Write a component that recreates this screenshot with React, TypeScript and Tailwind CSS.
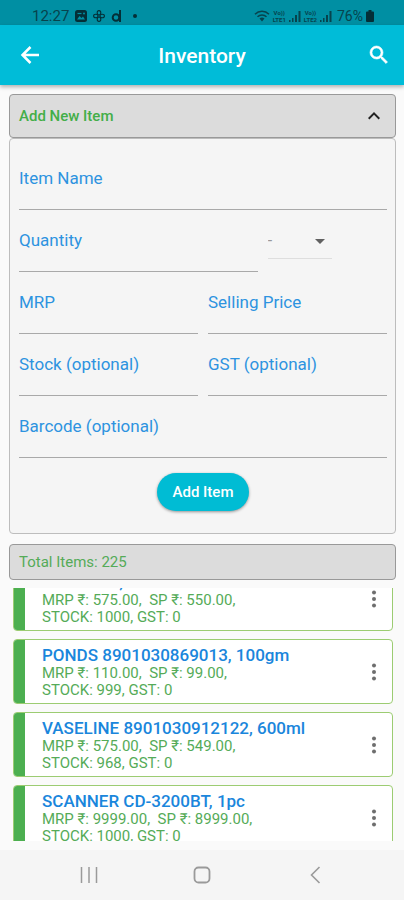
import { useEffect, useRef } from "react";

type Item = { name: string; mrp: string; sp: string; stock: number; gst: number };

const items: Item[] = [
  { name: "VASELINE, 100ml", mrp: "575.00", sp: "550.00", stock: 1000, gst: 0 },
  { name: "PONDS 8901030869013, 100gm", mrp: "110.00", sp: "99.00", stock: 999, gst: 0 },
  { name: "VASELINE 8901030912122, 600ml", mrp: "575.00", sp: "549.00", stock: 968, gst: 0 },
  { name: "SCANNER CD-3200BT, 1pc", mrp: "9999.00", sp: "8999.00", stock: 1000, gst: 0 },
];

function Signal() {
  return (
    <svg className="w-3 h-3" viewBox="0 0 12 12" fill="currentColor">
      <path d="M0 10h1.500v2H0zM3 8h1.500v4H3zM6 5h2v7H6zM9.500 1h2v11h-2z" />
    </svg>
  );
}

function Volte({ sim }: { sim: number }) {
  return (
    <span className="flex flex-col items-center text-[6px] leading-[7px] font-bold">
      <span>Vo))</span>
      <span>LTE{sim}</span>
    </span>
  );
}

function StatusBar() {
  return (
    <div className="h-[25px] shrink-0 bg-[#008fa3] text-[#07434d] flex items-center justify-between pt-[6px] pl-8 pr-[30px]">
      <div className="flex items-center gap-[6px]">
        <span className="text-[15px] leading-4">12:27</span>
        <svg className="w-3 h-3 text-[#042f37]" viewBox="0 0 12 12">
          <rect width="12" height="12" rx="2.500" fill="currentColor" />
          <path d="M2 9.500 4.500 6l2 2L8 6.500l2 3z" fill="#008fa3" />
          <path d="M2.500 3.500h4" stroke="#008fa3" strokeWidth="1.200" />
          <circle cx="9" cy="3.500" r="1" fill="#008fa3" />
        </svg>
        <svg className="w-3 h-3 text-[#042f37]" viewBox="0 0 12 12" fill="none" stroke="currentColor" strokeWidth="1.100">
          <ellipse cx="6" cy="2.800" rx="1.800" ry="2.200" />
          <ellipse cx="2.800" cy="6" rx="2.200" ry="1.800" />
          <ellipse cx="9.200" cy="6" rx="2.200" ry="1.800" />
          <ellipse cx="6" cy="9.200" rx="1.800" ry="2.200" />
        </svg>
        <svg className="w-3 h-3 text-[#042f37]" viewBox="0 0 12 12" fill="none" stroke="currentColor" strokeWidth="2">
          <circle cx="5" cy="7.500" r="3.300" />
          <path d="M9 0v12" />
        </svg>
        <span className="w-1 h-1 ml-1 rounded-full bg-[#042f37]" />
      </div>
      <div className="flex items-center gap-[3px]">
        <svg className="w-4 h-3" viewBox="0 0 16 12" fill="none" stroke="currentColor" strokeWidth="1.500">
          <path d="M1 4.200a10 10 0 0 1 14 0M3.500 6.700a6.500 6.500 0 0 1 9 0" />
          <path d="M5.500 8.600a4 4 0 0 1 5 0L8 11.500z" fill="currentColor" stroke="none" />
        </svg>
        <Volte sim={1} />
        <Signal />
        <Volte sim={2} />
        <Signal />
        <span className="text-sm leading-4 ml-[2px]">76%</span>
        <svg className="w-2 h-3 text-[#042f37]" viewBox="0 0 8 12" fill="currentColor">
          <path d="M2.500 0h3v1.500H7a1 1 0 0 1 1 1V11a1 1 0 0 1-1 1H1a1 1 0 0 1-1-1V2.500a1 1 0 0 1 1-1h1.500z" />
        </svg>
      </div>
    </div>
  );
}

function Field({ id, label, className = "" }: { id: string; label: string; className?: string }) {
  return (
    <div className={`min-w-0 flex-1 flex flex-col pt-5 ${className}`}>
      <label htmlFor={id} className="text-[17px] leading-5 text-[#2d93e0]">
        {label}
      </label>
      <input id={id} className="w-full h-[22px] border-b border-[#a9a9a9] bg-transparent text-base text-gray-800 outline-none" />
    </div>
  );
}

function ItemCard({ item }: { item: Item }) {
  return (
    <li className="flex shrink-0 h-[65px] rounded-[4px] border border-[#9ccc72] bg-white overflow-hidden">
      <div className="w-[11px] shrink-0 bg-[#4caf50]" />
      <div className="flex-1 min-w-0 pl-[17px] pt-[5px]">
        <h2 className="text-[17px] leading-5 font-medium text-[#1a86dc]">{item.name}</h2>
        <p className="text-[15px] leading-[17px] text-[#55ab58]">
          MRP ₹: {item.mrp},&nbsp; SP ₹: {item.sp},
          <br />
          STOCK: {item.stock}, GST: {item.gst}
        </p>
      </div>
      <button type="button" aria-label={`Options for ${item.name}`} className="w-9 flex items-center justify-center text-[#6e6e6e]">
        <svg className="w-6 h-6" viewBox="0 0 24 24" fill="currentColor">
          <circle cx="12" cy="5.500" r="2" />
          <circle cx="12" cy="12" r="2" />
          <circle cx="12" cy="18.500" r="2" />
        </svg>
      </button>
    </li>
  );
}

export default function App() {
  const listRef = useRef<HTMLUListElement>(null);

  // open the list part way down, so the first card runs under the total
  useEffect(() => {
    if (listRef.current) listRef.current.scrollTop = 22;
  }, []);

  return (
    <div className="h-screen flex flex-col bg-[#fafafa] font-['Roboto','Noto_Sans',sans-serif]">
      <StatusBar />
      <header className="relative h-[60px] shrink-0 bg-[#00bcd8] text-white flex items-center justify-between pl-[18px] pr-[13px] shadow-[0_2px_4px_rgba(0,0,0,0.3)]">
        <button type="button" aria-label="Back">
          <svg className="w-6 h-6" viewBox="0 0 24 24" fill="none" stroke="currentColor" strokeWidth="2.500">
            <path d="M21 12H5M12.500 4 4.500 12l8 8" />
          </svg>
        </button>
        <h1 className="flex-1 text-center text-[21px] leading-7 font-medium pt-[2px] pr-[5px]">Inventory</h1>
        <button type="button" aria-label="Search">
          <svg className="w-6 h-6" viewBox="0 0 24 24" fill="currentColor" stroke="currentColor" strokeWidth="0.600">
            <path d="M15.500 14h-.79l-.28-.27A6.471 6.471 0 0 0 16 9.500 6.500 6.500 0 1 0 9.500 16c1.610 0 3.090-.59 4.230-1.570l.27.28v.79l5 4.990L20.490 19l-4.990-5zm-6 0C7.010 14 5 11.990 5 9.500S7.010 5 9.500 5 14 7.010 14 9.500 11.990 14 9.500 14z" />
          </svg>
        </button>
      </header>

      <main className="flex-1 min-h-0 flex flex-col pl-[9px] pr-2 pt-[9px] pb-[9px]">
        <button
          type="button"
          aria-expanded="true"
          className="h-11 shrink-0 flex items-center justify-between px-[9px] rounded-[4px] border border-[#999] bg-[#dcdcdc]"
        >
          <span className="text-[15px] font-medium text-[#43ae48]">Add New Item</span>
          <svg className="w-6 h-6 text-[#222]" viewBox="0 0 24 24" fill="currentColor">
            <path d="m12 8-6 6 1.410 1.410L12 10.830l4.590 4.580L18 14z" />
          </svg>
        </button>

        <form
          onSubmit={(e) => e.preventDefault()}
          className="shrink-0 flex flex-col pl-[9px] pr-2 pt-[9px] pb-[22px] rounded-[4px] border border-[#bdbdbd] bg-[#f5f5f5]"
        >
          <Field id="name" label="Item Name" />
          <div className="flex items-start gap-[10px]">
            <Field id="quantity" label="Quantity" className="flex-[2]" />
            <div className="flex-1 pt-[13px]">
              <div className="relative w-16">
                <select aria-label="Unit" className="w-full h-9 appearance-none border-b border-[#dedede] bg-transparent text-base text-[#999] outline-none">
                  <option>-</option>
                </select>
                <svg className="absolute right-0 top-[6px] w-6 h-6 text-[#616161] pointer-events-none" viewBox="0 0 24 24" fill="currentColor">
                  <path d="m7 10 5 5 5-5z" />
                </svg>
              </div>
            </div>
          </div>
          <div className="flex gap-[10px]">
            <Field id="mrp" label="MRP" />
            <Field id="selling" label="Selling Price" />
          </div>
          <div className="flex gap-[10px]">
            <Field id="stock" label="Stock (optional)" />
            <Field id="gst" label="GST (optional)" />
          </div>
          <Field id="barcode" label="Barcode (optional)" />
          <button
            type="submit"
            className="self-center mt-[15px] h-[38px] px-4 rounded-full bg-[#00bcd4] text-white text-[15px] font-medium shadow-[0_1px_3px_rgba(0,0,0,0.4)]"
          >
            Add Item
          </button>
        </form>

        <div className="mt-[10px] h-9 shrink-0 flex items-center px-[9px] rounded-[4px] border border-[#999] bg-[#dcdcdc] text-[15px] text-[#55ab58]">
          Total Items: 225
        </div>

        <ul ref={listRef} className="flex-1 min-h-0 mt-2 ml-1 mr-[3px] flex flex-col gap-2 overflow-y-auto [scrollbar-width:none]">
          {items.map((item) => (
            <ItemCard key={item.name} item={item} />
          ))}
        </ul>
      </main>

      <nav className="h-[50px] shrink-0 bg-[#f5f5f5] text-[#9a9a9a] flex items-center justify-center gap-[89px]">
        <button type="button" aria-label="Recent apps">
          <svg className="w-6 h-6" viewBox="0 0 24 24" fill="none" stroke="currentColor" strokeWidth="1.500">
            <path d="M4.500 4v16M12 4v16M19.500 4v16" />
          </svg>
        </button>
        <button type="button" aria-label="Home">
          <svg className="w-6 h-6" viewBox="0 0 24 24" fill="none" stroke="currentColor" strokeWidth="1.800">
            <rect x="4.500" y="4.500" width="15" height="15" rx="4" />
          </svg>
        </button>
        <button type="button" aria-label="Go back">
          <svg className="w-6 h-6" viewBox="0 0 24 24" fill="none" stroke="currentColor" strokeWidth="1.600">
            <path d="M16.500 4 8.500 12l8 8" />
          </svg>
        </button>
      </nav>
    </div>
  );
}
